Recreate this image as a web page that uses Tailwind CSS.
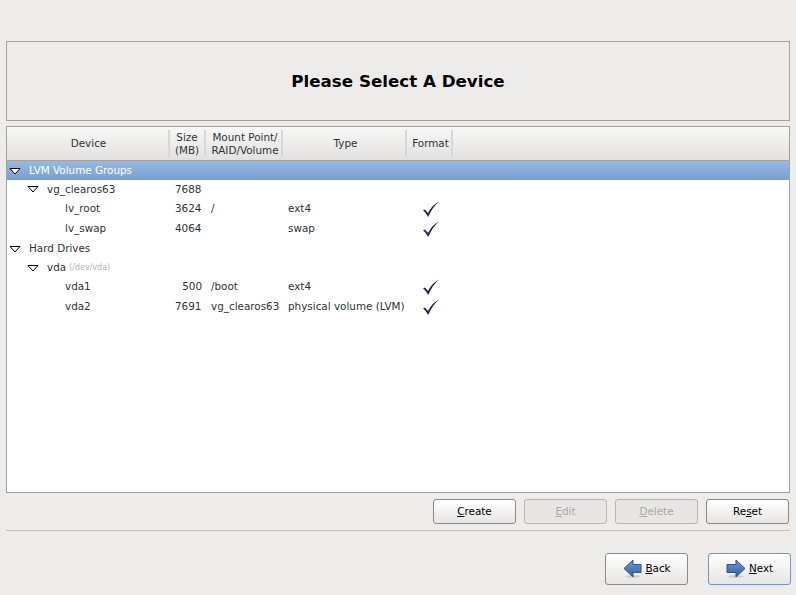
<!DOCTYPE html>
<html lang="en">

<head>
  <meta charset="UTF-8">
  <title>Please Select A Device</title>
  <script src="https://cdn.jsdelivr.net/npm/@tailwindcss/browser@4"></script>
</head>

<body class="overflow-hidden">
  <div class="w-[796px] h-[595px] bg-[#edeceb] pt-[41px] px-[6px] font-['DejaVu_Sans',sans-serif] text-[10.4px] text-[#2e3436]">

    <!-- title -->
    <div class="h-[80px] w-[784px] pt-[1px] border border-[#a3a19e] flex items-center justify-center text-[16.7px] font-bold text-black">
      Please Select A Device
    </div>

    <!-- device tree -->
    <div class="mt-[5px] h-[367px] w-[784px] border border-[#a3a19e] bg-white flex flex-col">
      <div class="h-[34px] shrink-0 grid grid-cols-[163px_36px_77px_124px_46px_1fr] bg-gradient-to-b from-[#f8f8f7] to-[#e2e1df] border-b border-[#a3a19e] text-center leading-[13px]">
        <div class="flex items-center justify-center pl-[2px] border-r-2 border-[#d8d7d5] my-[3px]">Device</div>
        <div class="flex items-center justify-center border-r-2 border-[#d8d7d5] my-[3px]">Size<br>(MB)</div>
        <div class="flex items-center justify-center pl-[3px] border-r-2 border-[#d8d7d5] my-[3px]">Mount Point/<br>RAID/Volume</div>
        <div class="flex items-center justify-center pl-[3px] border-r-2 border-[#d8d7d5] my-[3px]">Type</div>
        <div class="flex items-center justify-center pl-[3px] border-r-2 border-[#d8d7d5] my-[3px]">Format</div>
        <div></div>
      </div>

      <div class="h-[19px] flex items-center bg-gradient-to-b from-[#97b9e2] to-[#769fd0] text-white">
        <svg class="ml-[2px] mr-[8px]" width="12" height="8" viewBox="0 0 12 8"><path d="M1 1.500h10L6 7z" fill="#fff" stroke="#000"/></svg>
        <span class="pt-[1px]">LVM Volume Groups</span>
      </div>

      <div class="h-[19px] grid grid-cols-[163px_36px_77px_124px_46px] items-center">
        <div class="flex items-center pl-[20px]"><svg class="mr-[8px]" width="12" height="8" viewBox="0 0 12 8"><path d="M1 1.500h10L6 7z" fill="#fff" stroke="#000"/></svg>vg_clearos63</div>
        <div class="pl-[5px]">7688</div>
      </div>

      <div class="h-[19px] grid grid-cols-[163px_36px_77px_124px_46px] items-center">
        <div class="pl-[58px]">lv_root</div>
        <div class="pl-[5px]">3624</div>
        <div class="pl-[5px]">/</div>
        <div class="pl-[5px]">ext4</div>
        <div class="flex justify-center pl-[2px]"><svg width="18" height="18" viewBox="0 0 18 18"><path d="M1 10.500l2-1 3 3.500C8.500 8 12 4 17 1.500 12.500 5.500 9 10.500 6.200 17 5 14.500 3 12 1 10.500z" fill="#1f2a44"/></svg></div>
      </div>

      <div class="h-[20px] pt-[1px] grid grid-cols-[163px_36px_77px_124px_46px] items-center">
        <div class="pl-[58px]">lv_swap</div>
        <div class="pl-[5px]">4064</div>
        <div></div>
        <div class="pl-[5px]">swap</div>
        <div class="flex justify-center pl-[2px]"><svg width="18" height="18" viewBox="0 0 18 18"><path d="M1 10.500l2-1 3 3.500C8.500 8 12 4 17 1.500 12.500 5.500 9 10.500 6.200 17 5 14.500 3 12 1 10.500z" fill="#1f2a44"/></svg></div>
      </div>

      <div class="h-[20px] pt-[1px] flex items-center">
        <svg class="ml-[2px] mr-[8px]" width="12" height="8" viewBox="0 0 12 8"><path d="M1 1.500h10L6 7z" fill="#fff" stroke="#000"/></svg>
        <span>Hard Drives</span>
      </div>

      <div class="h-[19px] flex items-center pl-[20px]">
        <svg class="mr-[8px]" width="12" height="8" viewBox="0 0 12 8"><path d="M1 1.500h10L6 7z" fill="#fff" stroke="#000"/></svg>
        <span>vda</span><span class="ml-[3px] text-[8px] text-[#b5b5b5]">(/dev/vda)</span>
      </div>

      <div class="h-[19px] grid grid-cols-[163px_36px_77px_124px_46px] items-center">
        <div class="pl-[58px]">vda1</div>
        <div class="text-right pr-[4px]">500</div>
        <div class="pl-[5px]">/boot</div>
        <div class="pl-[5px]">ext4</div>
        <div class="flex justify-center pl-[2px]"><svg width="18" height="18" viewBox="0 0 18 18"><path d="M1 10.500l2-1 3 3.500C8.500 8 12 4 17 1.500 12.500 5.500 9 10.500 6.200 17 5 14.500 3 12 1 10.500z" fill="#1f2a44"/></svg></div>
      </div>

      <div class="h-[21px] grid grid-cols-[163px_36px_77px_124px_46px] items-center">
        <div class="pl-[58px]">vda2</div>
        <div class="pl-[5px]">7691</div>
        <div class="pl-[5px]">vg_clearos63</div>
        <div class="pl-[5px] whitespace-nowrap">physical volume (LVM)</div>
        <div class="flex justify-center pl-[2px]"><svg width="18" height="18" viewBox="0 0 18 18"><path d="M1 10.500l2-1 3 3.500C8.500 8 12 4 17 1.500 12.500 5.500 9 10.500 6.200 17 5 14.500 3 12 1 10.500z" fill="#1f2a44"/></svg></div>
      </div>
    </div>

    <!-- device actions -->
    <div class="mt-[6px] w-[783px] flex justify-end gap-[8px]">
      <button class="w-[83px] h-[25px] rounded-[3px] border border-[#8c8a87] bg-gradient-to-b from-white to-[#e6e5e3] text-black"><u>C</u>reate</button>
      <button class="w-[83px] h-[25px] rounded-[3px] border border-[#b8b6b3] bg-[#e7e6e4] text-[#a9a8a6]"><u>E</u>dit</button>
      <button class="w-[83px] h-[25px] rounded-[3px] border border-[#b8b6b3] bg-[#e7e6e4] text-[#a9a8a6]"><u>D</u>elete</button>
      <button class="w-[83px] h-[25px] rounded-[3px] border border-[#8c8a87] bg-gradient-to-b from-white to-[#e6e5e3] text-black">Re<u>s</u>et</button>
    </div>

    <div class="mt-[6px] w-[784px] h-[1px] bg-[#c4c2bf]"></div>

    <!-- wizard nav -->
    <div class="mt-[22px] w-[785px] flex justify-end gap-[20px]">
      <button class="w-[83px] h-[32px] rounded-[3px] border border-[#8c8a87] bg-gradient-to-b from-white to-[#e6e5e3] text-black flex items-center justify-center gap-[2px]">
        <svg width="20" height="20" viewBox="0 0 20 20"><defs><linearGradient id="backFill" x1="0" y1="0" x2="0" y2="1"><stop offset="0" stop-color="#6f9ad0"/><stop offset="1" stop-color="#2f5f9f"/></linearGradient></defs><ellipse cx="11" cy="17.500" rx="8" ry="1.500" fill="#000" fill-opacity=".12"/><path d="M2 9.500L11 1v4.500h8v8h-8V18z" fill="url(#backFill)" stroke="#2a5590"/></svg>
        <span class="pl-[1px]"><u>B</u>ack</span>
      </button>
      <button class="w-[83px] h-[32px] rounded-[3px] border border-[#6f97c6] bg-gradient-to-b from-white to-[#e6e5e3] text-black flex items-center justify-center gap-[3px]">
        <svg width="20" height="20" viewBox="0 0 20 20"><defs><linearGradient id="nextFill" x1="0" y1="0" x2="0" y2="1"><stop offset="0" stop-color="#6f9ad0"/><stop offset="1" stop-color="#2f5f9f"/></linearGradient></defs><ellipse cx="10" cy="17.500" rx="8" ry="1.500" fill="#000" fill-opacity=".12"/><path d="M19 9.500L10 1v4.500H1v8h9V18z" fill="url(#nextFill)" stroke="#2a5590"/></svg>
        <span><u>N</u>ext</span>
      </button>
    </div>
  </div>
</body>

</html>
